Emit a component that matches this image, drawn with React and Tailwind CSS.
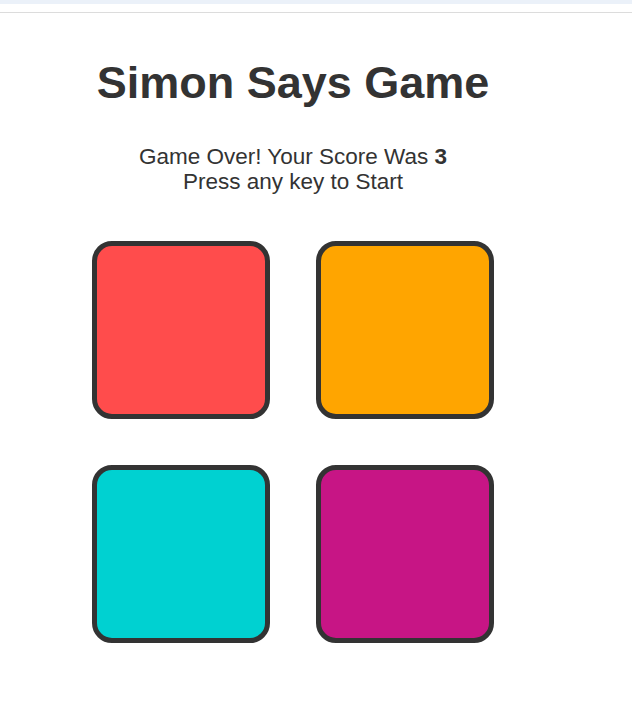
import React from 'react';

const pads = [
  { id: 'red', color: 'bg-[#ff4c4c]' },
  { id: 'orange', color: 'bg-[#ffa500]' },
  { id: 'cyan', color: 'bg-[#00d1d1]' },
  { id: 'magenta', color: 'bg-[#c71585]' },
];

const App = () => {
  return (
    <div className="min-h-screen bg-white font-['Liberation_Sans',Arial,sans-serif] text-[#333]">
      <div className="h-1 bg-[#ebf1f9]"></div>
      <div className="mt-2 border-t border-[#dcdcdc]"></div>

      <div className="w-[586px] text-center">
        <h1 className="mt-[44px] text-[45px] font-bold leading-[1.15]">Simon Says Game</h1>
        <p className="mt-[35px] text-[22.5px] leading-[25px]">
          Game Over! Your Score Was <b>3</b>
          <br />
          Press any key to Start
        </p>

        <div className="mt-[47px] grid grid-cols-[178px_178px] justify-center gap-[46px]">
          {pads.map((pad) => (
            <div
              key={pad.id}
              className={`h-[178px] w-[178px] rounded-[20px] border-[5px] border-[#333] ${pad.color}`}
            ></div>
          ))}
        </div>
      </div>
    </div>
  );
};

export default App;
